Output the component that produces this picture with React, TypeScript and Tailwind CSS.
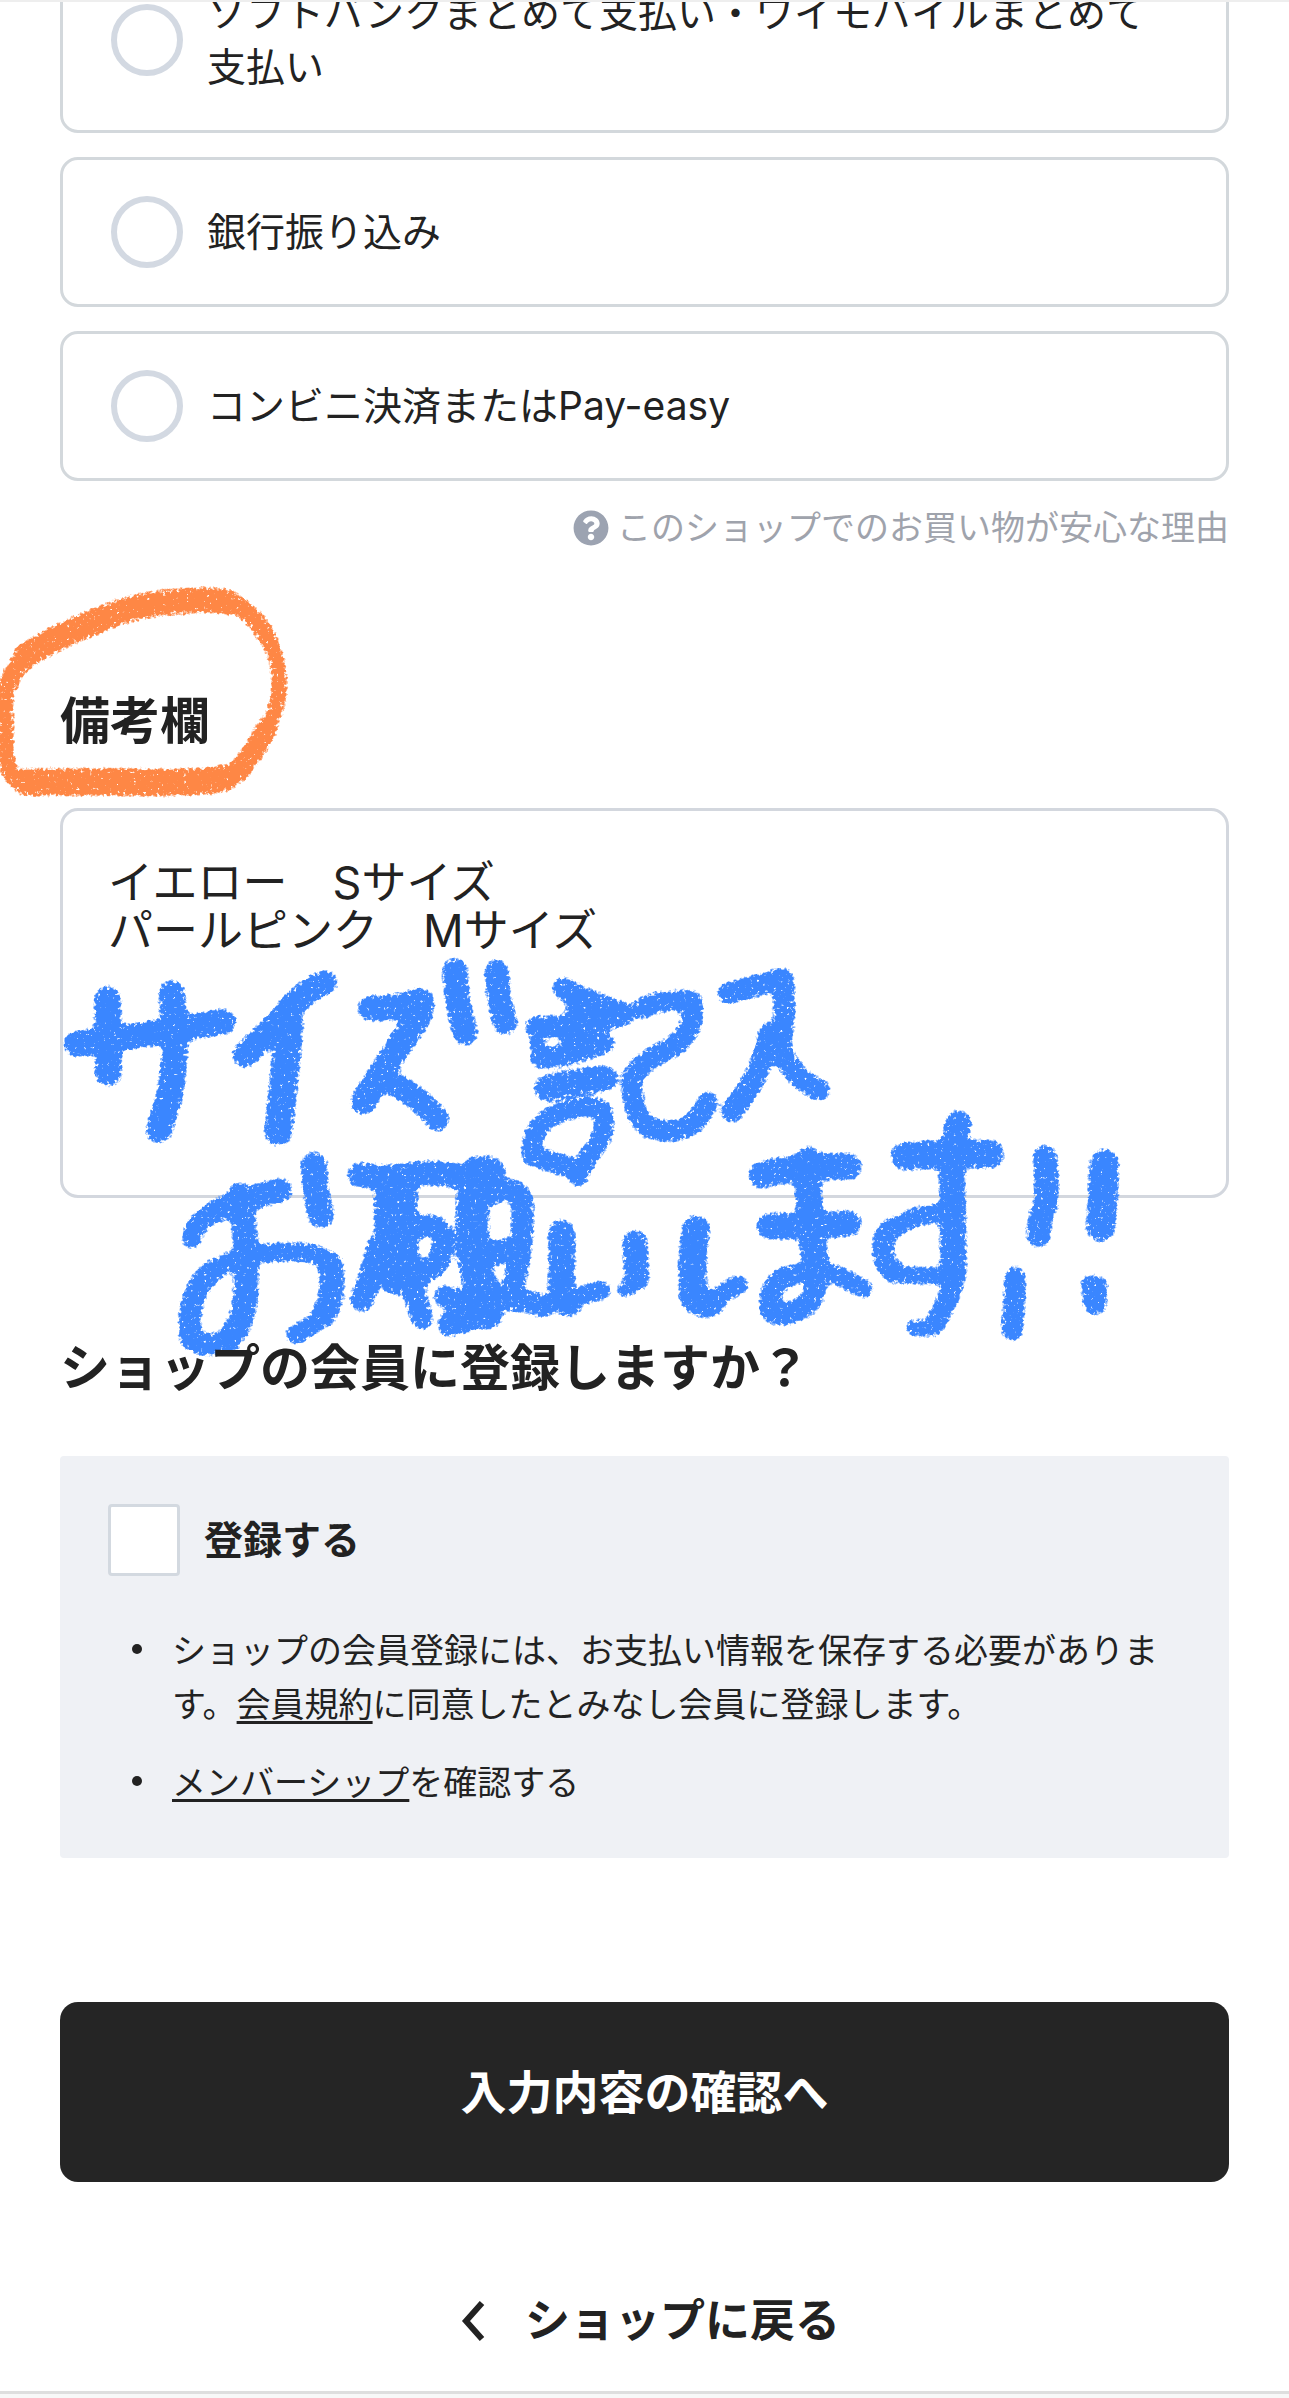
import { ReactNode } from "react";
import { FaQuestionCircle } from "react-icons/fa";

function PaymentOption({ id, children }: { id: string; children: ReactNode }) {
  return (
    <label
      htmlFor={id}
      className="flex cursor-pointer items-center gap-6 rounded-[18px] border-[3px] border-[#d3d8dc] px-12 py-9 text-[39px] leading-[54px]"
    >
      <input
        id={id}
        type="radio"
        name="payment"
        className="size-[72px] shrink-0 appearance-none rounded-full border-[6px] border-[#d3d9e2] bg-white checked:border-[20px] checked:border-[#222222]"
      />
      <span>{children}</span>
    </label>
  );
}

function CrayonFilter({ id, color, frequency, blur }: { id: string; color: string; frequency: number; blur: number }) {
  return (
    <filter id={id} x="-10%" y="-10%" width="120%" height="120%" colorInterpolationFilters="sRGB">
      <feGaussianBlur in="SourceAlpha" stdDeviation={blur} result="soft" />
      <feTurbulence type="fractalNoise" baseFrequency={frequency} numOctaves={3} seed={7} result="noise" />
      <feComposite in="soft" in2="noise" operator="arithmetic" k1={2} k2={0.12} k3={0} k4={0} />
      <feColorMatrix type="matrix" values="0 0 0 0 0  0 0 0 0 0  0 0 0 0 0  0 0 0 3.4 -1.4" result="grain" />
      <feFlood floodColor={color} />
      <feComposite in2="grain" operator="in" />
    </filter>
  );
}

function OrangeCircle() {
  return (
    <svg
      viewBox="0 570 300 240"
      className="pointer-events-none absolute -left-[60px] -top-[120px] h-[240px] w-[300px]"
      aria-hidden="true"
    >
      <CrayonFilter id="crayon-orange" color="#fe8745" frequency={0.3} blur={3} />
      <g filter="url(#crayon-orange)" fill="none" stroke="#000" strokeLinecap="round" strokeLinejoin="round">
        <path strokeWidth={19} d="M8 684 Q14 664 34 651" />
        <path strokeWidth={25} d="M26 655 Q50 638 102 618 Q140 601 190 600 Q214 597 229 602" />
        <path strokeWidth={18} d="M233 602 Q255 613 268 638" />
        <path strokeWidth={15} d="M268 636 Q281 662 279 693 Q276 712 265 733" />
        <path strokeWidth={21} d="M267 727 Q258 745 246 760 Q238 776 218 779" />
        <path strokeWidth={27} d="M224 777 Q205 783 122 781 L26 781" />
        <path strokeWidth={16} d="M22 783 Q7 775 6 755 L5 710 Q4 695 9 682" />
      </g>
    </svg>
  );
}

function BlueNote() {
  return (
    <svg
      viewBox="180 2424 3510 1740"
      className="pointer-events-none absolute left-0 top-0 h-[580px] w-[1170px]"
      role="img"
      aria-label="サイズ記入お願いします!!"
    >
      <CrayonFilter id="crayon-blue" color="#3a86ff" frequency={0.1} blur={10} />
      <g filter="url(#crayon-blue)" fill="none" stroke="#000" strokeLinecap="round" strokeLinejoin="round">
        <g transform="translate(120 2820)">
          <path strokeWidth={76} d="M110 312 L200 300 L400 270 L550 245" />
          <path strokeWidth={80} d="M203 178 L205 398" />
          <path strokeWidth={78} d="M395 160 L405 270 Q405 400 385 480 L357 570" />
          <path strokeWidth={74} d="M855 128 Q790 150 720 240 Q660 300 615 345" />
          <path strokeWidth={84} d="M748 250 Q735 400 715 575" />
          <path strokeWidth={76} d="M992 205 Q1070 205 1142 182 Q1150 210 1130 240 Q1060 340 970 485" />
          <path strokeWidth={70} d="M1060 430 Q1150 480 1192 538" />
          <path strokeWidth={74} d="M1245 92 Q1250 200 1276 278" />
          <path strokeWidth={72} d="M1370 95 Q1375 190 1396 248" />
        </g>
        <g transform="translate(1440 2820)">
          <path strokeWidth={66} d="M250 145 Q310 180 435 222" />
          <path strokeWidth={68} d="M170 262 Q300 265 430 222" />
          <path strokeWidth={66} d="M290 205 L370 215" />
          <path strokeWidth={60} d="M180 355 Q270 350 375 310" />
          <path strokeWidth={36} d="M165 312 L190 330 M260 300 L380 300" />
          <path strokeWidth={76} d="M200 445 Q280 425 375 415" />
          <path strokeWidth={58} d="M155 635 Q150 560 230 522 Q330 485 368 512 Q385 590 330 640 Q300 690 295 710" />
          <path strokeWidth={62} d="M155 645 L290 690" />
          <path strokeWidth={62} d="M490 205 Q520 180 635 182 Q650 270 580 320 Q470 370 455 420 Q455 520 500 560 Q580 590 640 550 Q670 520 682 485" />
          <path strokeWidth={64} d="M745 160 Q820 140 908 115 Q920 200 900 320 Q930 410 1018 450" />
          <path strokeWidth={66} d="M868 280 Q850 400 755 515" />
        </g>
        <g transform="translate(120 2820)">
          <path strokeWidth={60} d="M455 895 Q465 835 560 800" />
          <path strokeWidth={72} d="M540 808 Q640 770 720 750" />
          <path strokeWidth={74} d="M600 765 Q622 900 618 1020 Q620 1140 565 1200" />
          <path strokeWidth={66} d="M565 1200 Q500 1230 452 1195 Q435 1060 520 990" />
          <path strokeWidth={56} d="M505 1005 Q570 945 700 938 Q830 925 875 970" />
          <path strokeWidth={74} d="M872 975 Q885 1080 850 1125" />
          <path strokeWidth={56} d="M860 1125 Q810 1160 765 1185" />
          <path strokeWidth={78} d="M822 675 Q825 760 843 825" />
        </g>
        <g transform="translate(480 3390)">
          <path strokeWidth={74} d="M600 135 Q700 150 780 130 Q840 125 900 140" />
          <path strokeWidth={130} d="M708 170 Q704 300 715 430" />
          <path strokeWidth={70} d="M655 350 Q635 440 605 510" />
          <path strokeWidth={115} d="M700 380 L755 440" />
          <path strokeWidth={66} d="M755 470 L786 565" />
          <path strokeWidth={66} d="M775 292 Q830 270 848 320 Q855 385 815 415" />
          <path strokeWidth={74} d="M945 118 Q995 108 1000 130 Q980 170 940 210" />
          <path strokeWidth={100} d="M940 200 Q925 400 975 490" />
          <path strokeWidth={66} d="M990 192 Q1070 162 1086 210 Q1095 330 1060 470" />
          <path strokeWidth={74} d="M950 375 L1050 362" />
          <path strokeWidth={66} d="M855 500 Q930 520 1000 515 Q1080 500 1150 530" />
          <path strokeWidth={70} d="M868 585 Q940 570 1000 530 M870 580 L920 530 M960 560 L990 562" />
        </g>
        <g transform="translate(1440 2820)">
          <path strokeWidth={80} d="M245 880 L245 1010 Q235 1075 265 1090" />
          <path strokeWidth={56} d="M265 1095 Q310 1055 365 1052" />
          <path strokeWidth={74} d="M465 908 L470 1015" />
          <path strokeWidth={48} d="M475 1020 L437 1048" />
          <path strokeWidth={84} d="M648 868 Q632 950 640 1070 Q655 1095 690 1090" />
          <path strokeWidth={58} d="M690 1100 Q740 1045 775 1035" />
          <path strokeWidth={80} d="M845 705 Q960 675 1105 680" />
          <path strokeWidth={78} d="M868 858 Q980 860 1105 850" />
          <path strokeWidth={80} d="M985 660 Q980 800 1005 960" />
          <path strokeWidth={66} d="M1005 950 Q1020 1080 970 1100 Q900 1140 872 1110 Q860 1040 920 1010" />
          <path strokeWidth={56} d="M910 1015 Q1010 975 1080 1010 L1150 1045" />
        </g>
        <g transform="translate(2520 3240)">
          <path strokeWidth={84} d="M195 228 Q320 220 450 222" />
          <path strokeWidth={78} d="M355 130 L335 220 L338 380 L340 580" />
          <path strokeWidth={62} d="M345 590 Q330 660 280 738" />
          <path strokeWidth={48} d="M222 743 L250 746" />
          <path strokeWidth={56} d="M320 400 Q230 395 165 445" />
          <path strokeWidth={64} d="M155 445 Q120 470 132 530 Q140 565 165 575" />
          <path strokeWidth={50} d="M160 585 L320 588" />
          <path strokeWidth={72} d="M615 232 Q622 300 618 370 Q595 420 596 465" />
          <path strokeWidth={64} d="M525 592 Q525 650 516 750" />
          <path strokeWidth={88} d="M793 252 Q790 350 782 440" />
          <path strokeWidth={72} d="M762 622 L765 668" />
          <path strokeWidth={56} d="M750 614 L775 618" />
        </g>
      </g>
    </svg>
  );
}

const linkClass = "underline decoration-[3px] underline-offset-[4px]";

export default function App() {
  return (
    <div className="overflow-hidden border-t-2 border-[#eeeeee] bg-white font-['Inter','Noto_Sans_CJK_JP',sans-serif] text-[#222222]">
      <main className="px-[60px]">
        <fieldset className="-mt-[55px] flex flex-col gap-6">
          <PaymentOption id="carrier">ソフトバンクまとめて支払い・ワイモバイルまとめて支払い</PaymentOption>
          <PaymentOption id="bank">銀行振り込み</PaymentOption>
          <PaymentOption id="convenience">コンビニ決済またはPay-easy</PaymentOption>
        </fieldset>

        <div className="mt-5 flex justify-end">
          <a href="#safety" className="flex items-center gap-2 text-[34px] leading-[54px] text-[#9fa3ac]">
            <FaQuestionCircle className="size-9 text-[#9ca3b1]" aria-hidden="true" />
            このショップでのお買い物が安心な理由
          </a>
        </div>

        <section className="mt-[136px]">
          <div className="relative">
            <h2 className="text-[50px] font-bold leading-[60px]">
              <label htmlFor="remarks">備考欄</label>
            </h2>
            <OrangeCircle />
          </div>
          <div className="relative mt-[57px]">
            <textarea
              id="remarks"
              defaultValue={"イエロー　Sサイズ\nパールピンク　Mサイズ"}
              className="block h-[390px] w-full resize-none rounded-[18px] border-[3px] border-[#d3d7de] bg-white px-[45px] py-12 text-[45px] leading-[48px] outline-none"
            />
            <BlueNote />
          </div>
        </section>

        <section className="mt-[140px]">
          <h2 className="relative z-10 text-[50px] font-bold leading-[60px]">ショップの会員に登録しますか？</h2>
          <div className="mt-[58px] rounded bg-[#eff1f5] p-12">
            <label htmlFor="register" className="flex items-center gap-6 text-[39px] font-bold leading-[54px]">
              <input
                id="register"
                type="checkbox"
                className="size-[72px] appearance-none rounded border-[3px] border-[#d3d9e0] bg-white checked:bg-[#222222]"
              />
              登録する
            </label>
            <ul className="mt-12 flex flex-col gap-6 text-[34px] leading-[54px]">
              <li className="flex gap-[30px] pl-6">
                <span className="mt-5 size-[10px] shrink-0 rounded-full bg-[#222222]" />
                <span>
                  ショップの会員登録には、お支払い情報を保存する必要があります。
                  <a href="#terms" className={linkClass}>会員規約</a>
                  に同意したとみなし会員に登録します。
                </span>
              </li>
              <li className="flex gap-[30px] pl-6">
                <span className="mt-5 size-[10px] shrink-0 rounded-full bg-[#222222]" />
                <span>
                  <a href="#membership" className={linkClass}>メンバーシップ</a>を確認する
                </span>
              </li>
            </ul>
          </div>
        </section>

        <button
          type="button"
          className="mt-36 block w-full rounded-[18px] bg-[#252525] py-[60px] text-[46px] font-bold leading-[60px] text-white"
        >
          入力内容の確認へ
        </button>

        <div className="mt-[109px] mb-10 flex justify-center">
          <a href="#shop" className="flex items-center gap-10 pl-3 text-[45px] font-bold leading-[60px]">
            <svg viewBox="0 0 24 40" className="h-10 w-6" aria-hidden="true">
              <path d="M21 2 L5 20 L21 38" fill="none" stroke="currentColor" strokeWidth={6} />
            </svg>
            ショップに戻る
          </a>
        </div>
      </main>
      <footer className="h-2 border-t-[3px] border-[#dedede] bg-[#f8f8f8]" />
    </div>
  );
}
